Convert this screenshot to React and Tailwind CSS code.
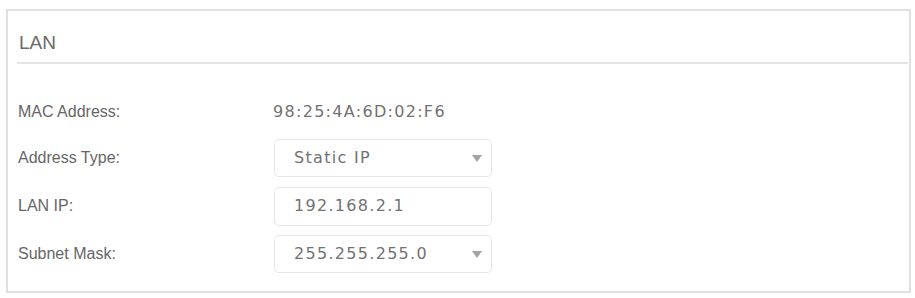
export default function App() {
  const label = "text-[16px] text-[#666] leading-none";
  const val = "text-[16px] tracking-[1.3px] text-[#727272] leading-none";
  const Arrow = () => (
    <svg width="10" height="7" viewBox="0 0 10 7" className="mr-[9px]">
      <path d="M0 0 L10 0 L5 7 Z" fill="#a3a3a3" />
    </svg>
  );
  const mono = { fontFamily: '"DejaVu Sans", Verdana, sans-serif' };
  return (
    <div className="w-[915px] h-[298px] bg-white pt-[9px] pl-[6px] pr-[4px] pb-[5px]" style={{ fontFamily: '"Liberation Sans", Arial, sans-serif' }}>
      <div className="h-full border-2 border-[#e0e0e0] flex flex-col pl-[9px] pr-[1px]">
        <div className="pt-[23px] pb-[10px] pl-[2px] text-[19px] leading-[18px] text-[#6a6a6a]">LAN</div>
        <div className="h-[2px] bg-[#e4e4e4]"></div>
        <div className="pt-[22px] flex flex-col">
          <div className="h-12 pt-[3px] flex items-center">
            <div className={`w-[256px] pl-[1px] ${label}`}>MAC Address:</div>
            <div className={val} style={mono}>98:25:4A:6D:02:F6</div>
          </div>
          <div className="h-12 flex items-center">
            <div className={`w-[257px] pl-[1px] ${label}`}>Address Type:</div>
            <div className="w-[218px] h-[38px] border border-[#e6e6e6] rounded-[5px] pl-[19px] flex items-center justify-between">
              <span className={val} style={mono}>Static IP</span>
              <Arrow />
            </div>
          </div>
          <div className="h-12 flex items-center">
            <div className={`w-[257px] pl-[1px] ${label}`}>LAN IP:</div>
            <div className="w-[218px] h-[39px] border border-[#e6e6e6] rounded-[5px] pl-[19px] flex items-center">
              <span className={val} style={mono}>192.168.2.1</span>
            </div>
          </div>
          <div className="h-12 flex items-center">
            <div className={`w-[257px] pl-[1px] ${label}`}>Subnet Mask:</div>
            <div className="w-[218px] h-[38px] border border-[#e6e6e6] rounded-[5px] pl-[19px] flex items-center justify-between">
              <span className={val} style={mono}>255.255.255.0</span>
              <Arrow />
            </div>
          </div>
        </div>
      </div>
    </div>
  );
}
